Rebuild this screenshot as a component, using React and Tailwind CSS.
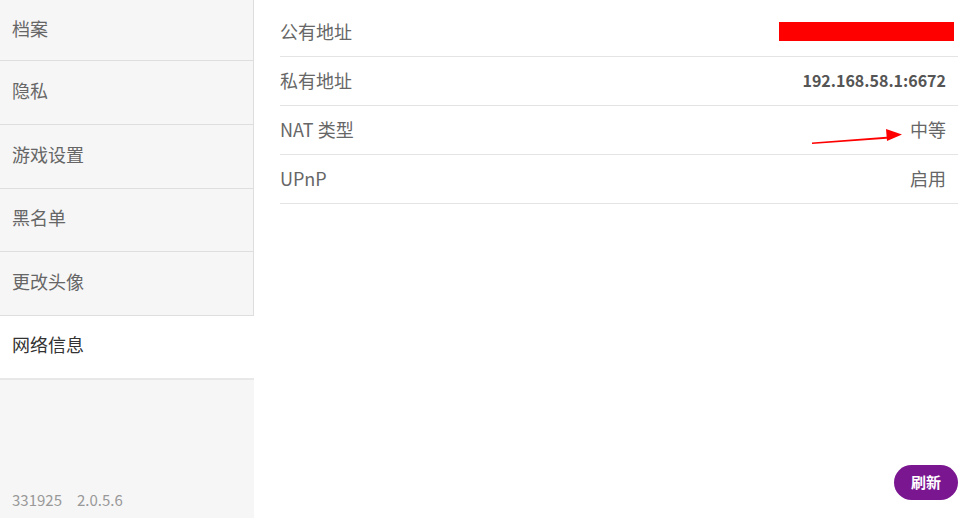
import React from "react";

const navItems = ["档案", "隐私", "游戏设置", "黑名单", "更改头像", "网络信息"];
const active = "网络信息";

const rows = [
  { label: "公有地址", value: null },
  { label: "私有地址", value: "192.168.58.1:6672", bold: true },
  { label: "NAT 类型", value: "中等" },
  { label: "UPnP", value: "启用" },
];

export default function App() {
  return (
    <div
      className="flex h-[518px] w-[973px] bg-white overflow-hidden"
      style={{ fontFamily: '"Microsoft YaHei", "Noto Sans CJK SC", "Liberation Sans", sans-serif' }}
    >
      {/* sidebar */}
      <div className="flex w-[254px] shrink-0 flex-col bg-[#f6f6f6]">
        {navItems.map((item, i) =>
          item === active ? (
            <div
              key={item}
              className="flex h-[64px] items-center border-b-2 border-[#e8e8e8] bg-white pb-[4px] pl-3 text-[18px] text-[#333]"
            >
              {item}
            </div>
          ) : (
            <div
              key={item}
              className={
                "flex items-center border-r border-b border-[#dedede] pb-[4px] pl-3 text-[18px] text-[#666] " +
                (i === 0 ? "h-[61px]" : i === 1 ? "h-[64px]" : "h-[63.5px]")
              }
            >
              {item}
            </div>
          )
        )}
        <div className="flex flex-1 items-end pb-[7px] pl-3 text-[15px] text-[#999]">
          <span>331925</span>
          <span className="ml-[15px]">2.0.5.6</span>
        </div>
      </div>

      {/* content */}
      <div className="relative flex flex-1 flex-col pl-[26px] pr-[15px] pt-[8px]">
        {rows.map((row) => (
          <div
            key={row.label}
            className="flex h-[49px] items-center justify-between border-b border-[#e4e4e4] pb-[2px] pr-[12px] text-[18px] text-[#666]"
          >
            <span>{row.label}</span>
            {row.value === null ? (
              <span className="mr-[-8px] mt-[1px] block h-[19px] w-[175px] bg-[#ff0000]" />
            ) : (
              <span className={row.bold ? "text-[16px] font-bold text-[#555]" : ""}>{row.value}</span>
            )}
          </div>
        ))}

        {/* annotation arrow */}
        <svg className="absolute left-[558px] top-[125px]" width="100" height="24" viewBox="0 0 100 24">
          <path d="M0 17.5 L78 11.5 L78 13.5 L0 19 Z" fill="#ff0000" />
          <path d="M74 4 L90 9.5 L75 16 Z" fill="#ff0000" />
        </svg>

        <div className="mt-auto mb-[18px] flex justify-end">
          <button className="h-[35px] w-[64px] rounded-full bg-[#7b1691] text-[15px] font-bold text-white">
            刷新
          </button>
        </div>
      </div>
    </div>
  );
}
